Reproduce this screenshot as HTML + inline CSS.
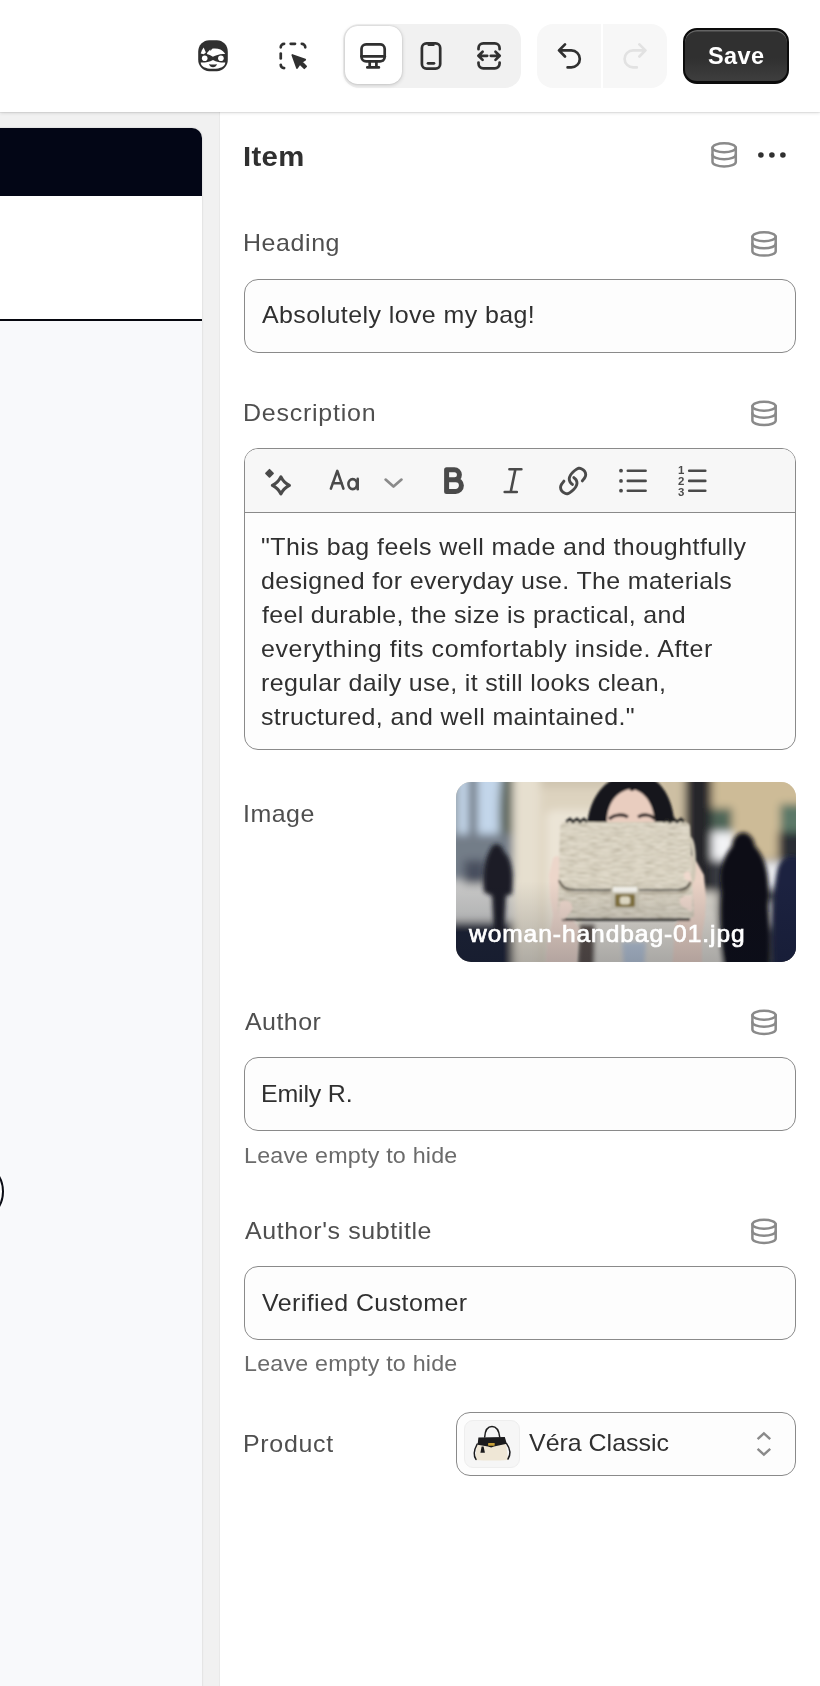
<!DOCTYPE html>
<html>
<head>
<meta charset="utf-8">
<style>
*{box-sizing:border-box;margin:0;padding:0}
html,body{width:820px;height:1686px;overflow:hidden;background:#fff}
body{font-family:"Liberation Sans",sans-serif;color:#303030;position:relative}
.abs{position:absolute}
.t{position:absolute;white-space:nowrap;line-height:1;transform:scaleX(1.04);transform-origin:0 50%;will-change:transform}
.lbl{color:#4f4f4f;font-size:24px}
.val{color:#303030;font-size:24px}
.help{color:#6b6b6b;font-size:22.4px}
.inp{position:absolute;left:244px;width:552px;border:1.4px solid #8a8a8a;border-radius:14px;background:#fdfdfd}
svg{position:absolute;overflow:visible}
</style>
</head>
<body>
<!-- gutter background -->
<div class="abs" id="gutter" style="left:0;top:112px;width:220px;height:1574px;background:#f1f1f1"></div>
<!-- header -->
<div class="abs" id="header" style="left:0;top:0;width:820px;height:112.2px;background:#fff;z-index:2;box-shadow:0 0.5px 0 rgba(0,0,0,.10),0 1px 3.5px rgba(0,0,0,.13)"></div>
<!-- right panel -->
<div class="abs" id="panel" style="left:219px;top:112px;width:601px;height:1574px;background:#fff;border-left:1px solid #e9e9e9"></div>
<!-- preview -->
<div class="abs" id="preview" style="left:-20px;top:128px;width:222px;height:1600px;background:#f8f9fb;border-radius:10px 10px 0 0;overflow:hidden;box-shadow:0 0 2px rgba(0,0,0,.18)">
  <div class="abs" style="left:0;top:0;width:222px;height:68px;background:#030616"></div>
  <div class="abs" style="left:0;top:68px;width:222px;height:124px;background:#fff"></div>
  <div class="abs" style="left:0;top:190.9px;width:222px;height:2.2px;background:#07080f"></div>
</div>
<div class="abs" id="circ" style="left:-59.2px;top:1159.7px;width:63.2px;height:63.2px;border:2.3px solid #0b0d16;border-radius:50%;background:#fff;box-shadow:0 0 3px 1px rgba(255,255,255,.9)"></div>

<!-- HEADER CONTROLS -->
<div class="abs" id="hc" style="left:0;top:0;width:820px;height:112px;z-index:3">
<div class="abs" id="seg" style="left:343px;top:24px;width:178px;height:64px;border-radius:16px;background:#f1f1f1"></div>
<div class="abs" id="segsel" style="left:344.7px;top:26.4px;width:57px;height:57.9px;border-radius:12.5px;background:#fff;box-shadow:0 1px 4px rgba(0,0,0,.18),0 0 1.5px rgba(0,0,0,.16)"></div>
<div class="abs" id="undo" style="left:537px;top:24px;width:130px;height:64px;border-radius:16px;background:#f7f7f7"></div>
<div class="abs" style="left:601px;top:24px;width:2px;height:64px;background:#fff"></div>
<div class="abs" id="save" style="left:683px;top:28px;width:105.5px;height:56px;border-radius:14px;background:linear-gradient(#303030 55%,#3e3e3e);border:2px solid #0c0c0c;border-bottom-width:3px;box-shadow:inset 0 1.5px 0 rgba(255,255,255,.25)"></div>
<div class="t" id="t_save" style="left:708.2px;top:44.8px;font-size:23.5px;font-weight:bold;color:#fff;transform:none;letter-spacing:0.40px">Save</div>

</div>
<!-- PANEL TEXT -->
<div class="t" id="t_item" style="left:243.2px;top:141.6px;font-size:28.2px;font-weight:bold;color:#303030;letter-spacing:0.32px">Item</div>

<div class="t lbl" id="t_heading" style="left:243.0px;top:231.3px;letter-spacing:0.56px">Heading</div>
<div class="inp" id="i_heading" style="top:278.7px;height:74.5px"></div>
<div class="t val" id="t_headingv" style="left:262.0px;top:303.2px;letter-spacing:0.40px">Absolutely love my bag!</div>

<div class="t lbl" id="t_desc" style="left:243.0px;top:401.2px;letter-spacing:0.74px">Description</div>
<div class="inp" id="i_desc" style="top:447.9px;height:301.8px;overflow:hidden"><div class="abs" style="left:0;top:0;width:552px;height:63.8px;background:#f7f7f7;border-bottom:1.4px solid #8a8a8a"></div></div>
<div class="t val" id="t_d1" style="left:261.0px;top:534.7px;letter-spacing:0.43px">"This bag feels well made and thoughtfully</div>
<div class="t val" id="t_d2" style="left:261.0px;top:568.7px;letter-spacing:0.33px">designed for everyday use. The materials</div>
<div class="t val" id="t_d3" style="left:261.9px;top:602.7px;letter-spacing:0.32px">feel durable, the size is practical, and</div>
<div class="t val" id="t_d4" style="left:261.0px;top:636.7px;letter-spacing:0.58px">everything fits comfortably inside. After</div>
<div class="t val" id="t_d5" style="left:260.5px;top:670.7px;letter-spacing:0.34px">regular daily use, it still looks clean,</div>
<div class="t val" id="t_d6" style="left:261.1px;top:704.7px;letter-spacing:0.37px">structured, and well maintained."</div>

<div class="t lbl" id="t_image" style="left:242.8px;top:801.7px;letter-spacing:0.48px">Image</div>
<div class="abs" id="img" style="left:456px;top:782px;width:340px;height:180px;border-radius:15px;background:#d9d0bd;overflow:hidden">
<svg width="340" height="180" viewBox="0 0 340 180" style="left:0;top:0">
<defs>
  <filter id="b4" x="-20%" y="-20%" width="140%" height="140%"><feGaussianBlur stdDeviation="4"/></filter>
  <filter id="b2" x="-20%" y="-20%" width="140%" height="140%"><feGaussianBlur stdDeviation="2.2"/></filter>
  <filter id="b1" x="-10%" y="-10%" width="120%" height="120%"><feGaussianBlur stdDeviation="0.8"/></filter>
  <filter id="tex" x="0" y="0" width="100%" height="100%"><feTurbulence type="fractalNoise" baseFrequency="0.09 0.55" numOctaves="2" seed="7" result="n"/><feColorMatrix in="n" type="matrix" values="0 0 0 0 0.45  0 0 0 0 0.41  0 0 0 0 0.31  1.9 0 0 0 -0.74" result="dk"/><feComposite in="dk" in2="SourceGraphic" operator="in" result="d2"/><feMerge><feMergeNode in="SourceGraphic"/><feMergeNode in="d2"/></feMerge></filter>
  <linearGradient id="ov" x1="0" y1="0" x2="0" y2="1"><stop offset="0.55" stop-color="#0a1020" stop-opacity="0"/><stop offset="1" stop-color="#0a1020" stop-opacity="0.25"/></linearGradient>
  <pattern id="straw" width="9" height="6.4" patternUnits="userSpaceOnUse"><rect width="9" height="6.4" fill="#e9e3d4"/><rect y="2.3" width="9" height="0.9" fill="#c6bda8"/><rect y="5.5" width="9" height="0.9" fill="#c9c1ad"/><rect x="1" y="0.5" width="4" height="1" fill="#ebe6d9"/><rect x="5" y="3.7" width="3.500" height="1" fill="#ebe6d9"/></pattern>
</defs>
<g filter="url(#b4)">
  <!-- left street -->
  <rect x="-10" y="-10" width="75" height="200" fill="#9aa3ac"/>
  <rect x="-10" y="-10" width="75" height="62" fill="#c3d6ea"/>
  <rect x="13" y="-10" width="8" height="70" fill="#5d646b"/><rect x="-10" y="-10" width="12" height="70" fill="#8e979f"/>
  <path d="M46,-10 H62 V70 H46 C42,50 42,20 46,-10Z" fill="#5c655c"/>
  <rect x="-10" y="52" width="70" height="48" fill="#737d88"/>
  <rect x="-10" y="98" width="70" height="45" fill="#c9c9c8"/>
  <rect x="8" y="78" width="22" height="24" fill="#4a4f5e"/>
  <rect x="-10" y="140" width="70" height="50" fill="#1a2236"/>
  <!-- column + wall -->
  <rect x="57" y="-10" width="30" height="200" fill="#e6dfcf"/>
  <rect x="84" y="-10" width="150" height="200" fill="#ddd3bf"/>
  <rect x="90" y="28" width="60" height="170" rx="8" fill="#ebe4d6"/>
  <rect x="84" y="-10" width="150" height="16" fill="#cfc5b0"/>
  <!-- right building -->
  <rect x="254" y="-10" width="100" height="100" fill="#cdbb97"/>
  <rect x="203" y="-10" width="28" height="80" fill="#cdbfa3"/>
  <rect x="256" y="26" width="20" height="26" fill="#4f6658"/>
  <rect x="254" y="50" width="24" height="28" fill="#f2f3f5"/>
  <rect x="324" y="22" width="26" height="30" fill="#5c7867"/>
  <rect x="322" y="50" width="28" height="30" fill="#2b2f36"/>
  <rect x="254" y="78" width="100" height="112" fill="#3a3c44"/>
  <rect x="300" y="80" width="26" height="26" fill="#e9eaee"/>
  <rect x="300" y="120" width="18" height="24" fill="#b9b9bd"/>
  <!-- dark column -->
  <rect x="229" y="-10" width="27" height="125" fill="#26272c"/>
  <rect x="236" y="110" width="26" height="80" fill="#d9d5cc"/>
</g>
<g filter="url(#b2)">
  <!-- people -->
  <path d="M34,68 C36,60 46,60 48,70 C56,76 58,95 56,112 L50,114 L48,150 H38 L36,114 L28,110 C26,95 28,78 34,68Z" fill="#1d1f25"/>
  <path d="M276,64 C278,46 296,46 299,64 C312,78 314,100 312,124 C314,150 314,170 312,190 H270 C266,160 264,130 266,110 C262,92 266,76 276,64Z" fill="#101115"/>
  <path d="M322,86 C328,70 344,70 350,86 V190 H318 C316,150 316,110 322,86Z" fill="#1a2440"/>
  <!-- clothing -->
  <path d="M128,134 L120,190 H268 L256,128 Z" fill="#dedad1"/>
  <path d="M166,160 L168,190 H188 L190,160Z" fill="#b9c7d8"/>
  <path d="M124,142 L121,190 H138 L139,142Z" fill="#5a5048"/>
</g>
<g filter="url(#b1)">
  <!-- hair / face -->
  <path d="M131,46 C132,16 150,-8 178,-8 C204,-8 217,14 219,46 Z" fill="#17171a"/>
  <path d="M151,46 C149,26 158,9 175,7 C190,9 199,24 199,46Z" fill="#e9cdbf"/>
  <path d="M153,37 C159,32 167,32 172,35 M182,35 C187,32 194,32 199,37" stroke="#2a2020" stroke-width="3.2" fill="none"/>
  <path d="M176,-8 V9" stroke="#17171a" stroke-width="4"/>
  <!-- hands -->
  <path d="M97,76 C101,72 105,74 105,80 L106,120 L116,137 L123,146 L120,190 H89 L91,162 L95,145 L97,133 L94,116 L93,93 Z" fill="#ecd6ca"/>
  <path d="M238,75 C233,72 231,76 232,82 L232,128 L219,143 L216,190 H246 L246,153 L249,135 L250,116 L248,93 Z" fill="#ead2c5"/>
  <!-- bag -->
  <path d="M104,46 Q104,40 110,40 L228,40 Q234,40 234,46 L236,96 L238,131 Q238,137 232,137 L110,137 Q102,137 102,131 Z" fill="url(#straw)" filter="url(#tex)"/>
  <path d="M103,98 C105,105 111,108 120,108 L222,108 C230,108 234,104 235,97" stroke="#2f2a22" stroke-width="1.8" fill="none" opacity="0.85"/><path d="M104,101 C106,108 112,111 120,111 L222,111 C230,111 234,107 235,100" stroke="#8d8470" stroke-width="2" fill="none" opacity="0.5"/>
  <path d="M106,137.500 H234" stroke="#26231f" stroke-width="2.6"/>
  <path d="M207,40 l4,-3 l3,3 l4,-3 l3,3 l4,-3 l3,3 M110,40 l4,-3 l3,3 l4,-3 l3,3 l4,-3 l3,3" stroke="#222" stroke-width="2.6" fill="none"/>
  <path d="M233,56 C239,58 239,90 236,100" stroke="#cfc8b6" stroke-width="4" fill="none"/>
  <!-- fingers over bag -->
  <path d="M104,120 C110,116 118,120 116,128 L108,138 L102,134Z" fill="#efd9cd"/>
  <path d="M234,90 C228,88 226,94 230,98 L236,100Z M236,114 C226,112 220,118 226,124 L236,130Z" fill="#efd9cd"/>
  <!-- clasp -->
  <rect x="155" y="103" width="28" height="25" rx="2" fill="#cbc5b2"/>
  <rect x="157" y="105" width="24" height="5" fill="#f4f3ec"/>
  <rect x="159" y="112" width="20" height="13" rx="2" fill="#85743f"/>
  <rect x="164" y="114.500" width="10" height="8" rx="2.500" fill="#e9e3cc"/>
</g>
<rect width="340" height="180" fill="url(#ov)"/>
</svg></div>
<div class="t" id="t_fname" style="left:468.9px;top:922.7px;font-size:23.6px;font-weight:normal;-webkit-text-stroke:0.7px #fff;color:#fff;letter-spacing:0.90px">woman-handbag-01.jpg</div>

<div class="t lbl" id="t_author" style="left:245.0px;top:1009.7px;letter-spacing:0.44px">Author</div>
<div class="inp" id="i_author" style="top:1056.6px;height:74.6px"></div>
<div class="t val" id="t_authorv" style="left:260.5px;top:1081.7px;letter-spacing:-0.18px">Emily R.</div>
<div class="t help" id="t_help1" style="left:243.7px;top:1144.5px;letter-spacing:0.19px">Leave empty to hide</div>

<div class="t lbl" id="t_sub" style="left:245.0px;top:1218.7px;letter-spacing:0.58px">Author's subtitle</div>
<div class="inp" id="i_sub" style="top:1265.6px;height:74.6px"></div>
<div class="t val" id="t_subv" style="left:261.6px;top:1290.7px;letter-spacing:0.40px">Verified Customer</div>
<div class="t help" id="t_help2" style="left:243.7px;top:1353.0px;letter-spacing:0.19px">Leave empty to hide</div>

<div class="t lbl" id="t_prod" style="left:243.0px;top:1431.7px;letter-spacing:0.67px">Product</div>
<div class="inp" id="i_prod" style="left:455.9px;width:340.3px;top:1411.6px;height:64.6px"></div>
<div class="abs" id="thumb" style="left:464px;top:1420px;width:56px;height:48px;border-radius:9px;background:#f6f6f6;border:1px solid #eeeeee"></div>
<div class="t val" id="t_prodv" style="left:528.5px;top:1431.2px;letter-spacing:-0.01px">Véra Classic</div>


<!-- ICON OVERLAY (page coordinates) -->
<svg id="icons" width="820" height="1686" viewBox="0 0 820 1686" style="left:0;top:0;will-change:transform;z-index:4" fill="none" stroke-linecap="round" stroke-linejoin="round">
<!-- robin face -->
<g id="robin" transform="translate(198.2 40.2)">
  <rect x="0" y="0" width="29.6" height="31" rx="11" ry="11.5" fill="#303030"/>
  <path d="M2.5,13.4 C3.2,11 4.2,9 5.4,7.4 L7.7,12.2 L5.6,14 Z" fill="#fff"/>
  <path d="M9.2,12.4 L12,9.2 L12.4,10.8 L13.9,8.6 C17,8.1 20,8.5 22.2,9.3 C23.8,10.1 25.8,11.8 27,13.8 L24.6,13.8 C21,14.1 17.5,15.1 14.7,16.5 C12.5,15.3 10.8,14.4 8.6,13.8 Z" fill="#fff"/>
  <circle cx="6.5" cy="18.1" r="2.8" fill="#fff"/>
  <circle cx="22.7" cy="18.1" r="2.8" fill="#fff"/>
  <path d="M2.5,22.3 C6,22.6 11,21.8 14.8,19.7 C18.5,21.8 23.5,22.6 27.1,22.3 C26.8,26.3 22.5,28.6 14.8,28.6 C7,28.6 2.8,26.3 2.5,22.3 Z" fill="#fff"/>
  <path d="M10.9,23.7 C12.6,24.6 17,24.6 18.7,23.7 C18.3,26 16.6,27 14.8,27 C13,27 11.3,26 10.9,23.7Z" fill="#303030"/>
</g>
<!-- select icon -->
<g id="selicon" stroke="#303030" stroke-width="2.7">
  <path d="M280.75,47.3 A3.4,3.4 0 0 1 284.1,43.85"/>
  <path d="M290.7,43.85 H295"/>
  <path d="M301.8,43.85 A3.4,3.4 0 0 1 305.25,47.3"/>
  <path d="M280.75,53.6 V58.4"/>
  <path d="M280.75,64.8 A3.4,3.4 0 0 0 284.1,68.05"/>
  <path d="M292.3,55 L305.2,59.7 L301.7,62 L306.1,66.4 L304.3,68.2 L299.9,63.8 L297,68 Z" fill="#303030" stroke-width="1.8"/>
</g>
<!-- desktop -->
<g id="desk" stroke="#303030" stroke-width="2.7">
  <rect x="361.5" y="44.4" width="23.2" height="17" rx="4.6"/>
  <path d="M361.5,56.3 H384.7"/>
  <path d="M369.7,61.4 V67.4 M376.4,61.4 V67.4 M367.3,67.4 H378.9"/>
</g>
<!-- mobile -->
<g id="mob" stroke="#303030" stroke-width="2.7">
  <rect x="421.9" y="43.3" width="18.3" height="25.3" rx="4.6"/>
  <path d="M428.6,45 H433.6" stroke-width="2.2"/>
  <path d="M428,63.3 H434"/>
</g>
<!-- resize -->
<g id="resz" stroke="#303030" stroke-width="2.7">
  <path d="M478.5,49.2 V48.2 A4.8,4.8 0 0 1 483.3,43.4 H494.8 A4.8,4.8 0 0 1 499.6,48.2 V49.2"/>
  <path d="M478.5,62.6 V63.6 A4.8,4.8 0 0 0 483.3,68.4 H494.8 A4.8,4.8 0 0 0 499.6,63.6 V62.6"/>
  <path d="M482.6,51.8 L478.4,55.8 L482.6,59.9 M478.8,55.8 H487.2"/>
  <path d="M495.5,51.8 L499.7,55.8 L495.5,59.9 M499.3,55.8 H490.8"/>
</g>
<!-- undo / redo -->
<path id="undoi" stroke="#303030" stroke-width="2.7" d="M565,44.4 L559,50.4 L565,56.5 M559.4,50.4 H571.3 A8.5,8.5 0 0 1 571.3,67.4 H567.6"/>
<path id="redoi" stroke="#e2e2e2" stroke-width="2.7" d="M639.4,44.4 L645.4,50.4 L639.4,56.5 M645,50.4 H633.1 A8.5,8.5 0 0 0 633.1,67.4 H636.8"/>

<!-- PANEL ICONS -->
<g id="dbs" stroke="#8a8a8a" stroke-width="2.5">
<g transform="translate(724.15 154.85)"><ellipse cx="0" cy="-7.15" rx="11.65" ry="4.45"/><path d="M-11.65,-7.15 V7.2 A11.65,4.45 0 0 0 11.65,7.2 V-7.15"/><path d="M-11.65,-0.1 A11.65,4.45 0 0 0 11.65,-0.1"/></g>
<g transform="translate(764.05 243.95)"><ellipse cx="0" cy="-7.15" rx="11.65" ry="4.45"/><path d="M-11.65,-7.15 V7.2 A11.65,4.45 0 0 0 11.65,7.2 V-7.15"/><path d="M-11.65,-0.1 A11.65,4.45 0 0 0 11.65,-0.1"/></g>
<g transform="translate(764.05 413.40)"><ellipse cx="0" cy="-7.15" rx="11.65" ry="4.45"/><path d="M-11.65,-7.15 V7.2 A11.65,4.45 0 0 0 11.65,7.2 V-7.15"/><path d="M-11.65,-0.1 A11.65,4.45 0 0 0 11.65,-0.1"/></g>
<g transform="translate(764.05 1022.35)"><ellipse cx="0" cy="-7.15" rx="11.65" ry="4.45"/><path d="M-11.65,-7.15 V7.2 A11.65,4.45 0 0 0 11.65,7.2 V-7.15"/><path d="M-11.65,-0.1 A11.65,4.45 0 0 0 11.65,-0.1"/></g>
<g transform="translate(764.05 1231.35)"><ellipse cx="0" cy="-7.15" rx="11.65" ry="4.45"/><path d="M-11.65,-7.15 V7.2 A11.65,4.45 0 0 0 11.65,7.2 V-7.15"/><path d="M-11.65,-0.1 A11.65,4.45 0 0 0 11.65,-0.1"/></g>
</g>
<g id="dots" fill="#303030"><circle cx="760.9" cy="155" r="2.8"/><circle cx="771.9" cy="155" r="2.8"/><circle cx="782.9" cy="155" r="2.8"/></g>
<!-- toolbar -->
<g id="tb" stroke="#4a4a4a" stroke-width="2.6">
  <path d="M269.5,469.8 L273,473.3 L269.5,476.8 L266,473.3 Z" fill="#4a4a4a" stroke-width="1.8"/>
  <g transform="translate(280.9 485.4)"><path d="M0,-8.5 Q2.8,-2.8 8.5,0 Q2.8,2.8 0,8.5 Q-2.8,2.8 -8.5,0 Q-2.8,-2.8 0,-8.5Z" stroke-width="3.2"/></g>
  <path d="M330.9,488.6 L337.3,470.9 L343.4,488.6 M332.6,483.3 H341.8"/>
  <ellipse cx="352.7" cy="484.1" rx="4.3" ry="5"/><path d="M357.7,478.9 V489.2"/>
  <path d="M385.6,479.6 L393.5,486.6 L401.5,479.6" stroke="#8a8a8a" stroke-width="2.7"/>
  <path d="M446.6,469.8 H454.4 A5,5 0 0 1 454.4,479.8 H446.6 M454.4,479.8 H455.6 A5.8,5.8 0 0 1 455.6,491.4 H446.6 V469.8" stroke-width="5"/>
  <path d="M509.4,469.3 H521.4 M504.7,492 H516.8 M515.4,469.3 L510.7,492"/>
  <path stroke-width="2.9" d="M563.93,481.12 C563.51,481.69 561.98,483.46 561.42,484.52 C560.85,485.57 560.49,486.37 560.54,487.44 C560.59,488.52 560.98,489.98 561.71,490.96 C562.44,491.93 563.95,492.84 564.93,493.30 C565.91,493.76 566.73,493.83 567.56,493.71 C568.39,493.59 568.93,493.25 569.91,492.60 C570.88,491.94 572.44,490.74 573.42,489.79 C574.40,488.83 575.17,487.93 575.76,486.86 C576.36,485.79 576.89,484.42 576.99,483.35 C577.09,482.27 576.70,481.22 576.35,480.42 C576.00,479.62 575.30,479.01 574.88,478.55 C574.46,478.08 574.00,477.77 573.83,477.61"/><path stroke-width="2.9" d="M582.32,480.89 C582.74,480.32 584.27,478.55 584.84,477.49 C585.40,476.44 585.76,475.64 585.71,474.56 C585.67,473.49 585.28,472.03 584.54,471.05 C583.81,470.08 582.30,469.17 581.32,468.71 C580.35,468.25 579.52,468.18 578.69,468.30 C577.86,468.42 577.32,468.76 576.35,469.41 C575.37,470.07 573.81,471.27 572.83,472.22 C571.86,473.18 571.09,474.08 570.49,475.15 C569.90,476.22 569.36,477.59 569.26,478.66 C569.16,479.74 569.56,480.79 569.91,481.59 C570.26,482.39 570.95,483.00 571.37,483.46 C571.79,483.93 572.25,484.24 572.42,484.40"/>
  <g fill="#4a4a4a" stroke="none"><circle cx="621" cy="470.7" r="1.9"/><circle cx="621" cy="480.9" r="1.9"/><circle cx="621" cy="490.7" r="1.9"/></g>
  <path d="M627.8,470.7 H645.6 M627.8,480.9 H645.6 M627.8,490.7 H645.6"/>
  <path d="M689.2,470.7 H705.3 M689.2,480.9 H705.3 M689.2,490.7 H705.3"/>
  <g fill="#4a4a4a" stroke="none" font-family="Liberation Sans, sans-serif" font-weight="bold" font-size="11.4" text-anchor="middle"><text x="681.1" y="474.1">1</text><text x="681.1" y="485.1">2</text><text x="681.1" y="495.9">3</text></g>
</g>
<!-- select chevrons -->
<g id="updn" stroke="#8a8a8a" stroke-width="2.4" stroke-linecap="butt" stroke-linejoin="miter">
  <path d="M757.6,1439.2 L763.9,1433.4 L770.2,1439.2"/>
  <path d="M757.6,1448.8 L763.9,1454.6 L770.2,1448.8"/>
</g>
<!-- bag thumb -->
<g id="bag">
  <path d="M484.7,1437 C485.2,1430 488,1426.6 492,1426.6 C496,1426.6 498.8,1430 499.7,1437" stroke="#1c1c1c" stroke-width="1.5"/>
  <path d="M476.8,1444.6 L506,1443.8 L508.2,1460 Q492,1461 475.2,1460 Z" fill="#efe7d6"/>
  <path d="M478.4,1437.4 L504.8,1437 L506.8,1443.8 L494,1446.6 L491.2,1447.4 L488,1446.4 L477.6,1444.8 Z" fill="#1b1b1d"/>
  <path d="M477.2,1444 C474,1450 473,1455 476,1459.4 M506.6,1443.6 C510.4,1449 511,1454 508,1459" stroke="#1b1b1d" stroke-width="1.5"/>
  <rect x="488.1" y="1442.9" width="6.6" height="2.8" rx="0.6" fill="#c8a13a"/>
  <path d="M481.6,1446.6 L483.6,1446.6 L484.9,1452.8 L480.4,1452.8 Z" fill="#1b1b1d"/>
</g>
</svg>
</body>
</html>
